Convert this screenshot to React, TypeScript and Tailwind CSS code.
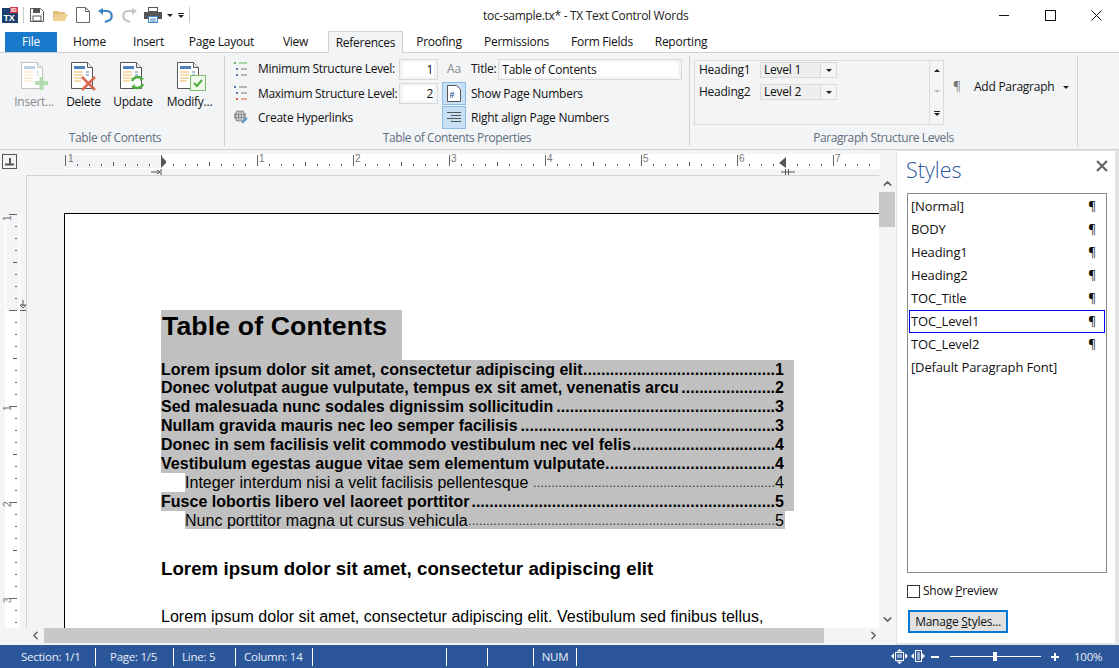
import React from 'react';
import { ChevronUp, ChevronDown, ChevronLeft, ChevronRight } from 'lucide-react';

const TABS = [
  { name: 'Home', w: 'w-[65px]' },
  { name: 'Insert', w: 'w-[53px]' },
  { name: 'Page Layout', w: 'w-[93px]' },
  { name: 'View', w: 'w-[55px]' },
];
const TABS_AFTER = [
  { name: 'Proofing', w: 'w-[72px]' },
  { name: 'Permissions', w: 'w-[83px]' },
  { name: 'Form Fields', w: 'w-[88px]' },
  { name: 'Reporting', w: 'w-[70px]' },
];

const TOC_ROWS = [
  { text: 'Lorem ipsum dolor sit amet, consectetur adipiscing elit', page: 1, level: 1, dots: 43 },
  { text: 'Donec volutpat augue vulputate, tempus ex sit amet, venenatis arcu', page: 2, level: 1, dots: 21 },
  { text: 'Sed malesuada nunc sodales dignissim sollicitudin', page: 3, level: 1, dots: 49 },
  { text: 'Nullam gravida mauris nec leo semper facilisis', page: 3, level: 1, dots: 57 },
  { text: 'Donec in sem facilisis velit commodo vestibulum nec vel felis', page: 4, level: 1, dots: 32 },
  { text: 'Vestibulum egestas augue vitae sem elementum vulputate.', page: 4, level: 1, dots: 37 },
  { text: 'Integer interdum nisi a velit facilisis pellentesque', page: 4, level: 2, dots: 67 },
  { text: 'Fusce lobortis libero vel laoreet porttitor', page: 5, level: 1, dots: 68 },
  { text: 'Nunc porttitor magna ut cursus vehicula', page: 5, level: 3, dots: 85 },
];

const STYLES = ['[Normal]', 'BODY', 'Heading1', 'Heading2', 'TOC_Title', 'TOC_Level1', 'TOC_Level2'];

const DocBase = ({ faded }: { faded?: boolean }) => (
  <>
    <path d="M1.5 1.5h16l5 5v21h-21z" fill="#fff" stroke={faded ? '#c4c4c4' : '#555'} />
    <path d="M17.5 1.5v5h5" fill="#f0f0f0" stroke={faded ? '#c4c4c4' : '#555'} />
    <rect x="4" y="5" width="11" height="3" fill={faded ? '#bcd0e2' : '#4f81bd'} />
    <path d="M4 11h9M4 14h9M4 17h9M4 20h7" stroke={faded ? '#f4dfb8' : '#eeb85f'} strokeWidth="1" />
    <path d="M16 11h3M16 14h3" stroke={faded ? '#bcd0e2' : '#4f81bd'} strokeWidth="1" />
  </>
);

const BigButton = ({ label, kind, muted, w }: { label: string; kind: string; muted?: boolean; w: string }) => (
  <div className={`flex flex-col items-center ${w}`}>
    <svg width="34" height="32" viewBox="0 0 34 32">
      <g transform="translate(3 0)">
        <DocBase faded={kind === 'insert'} />
      </g>
      {kind === 'insert' && <path d="M18 22h13M24.500 16v13" stroke="#b4dcae" strokeWidth="4" />}
      {kind === 'delete' && <path d="M15 16l13 13M28 16L15 29" stroke="#d9694e" strokeWidth="2.6" />}
      {kind === 'update' && (
        <g fill="none" stroke="#4caf3f" strokeWidth="2.4">
          <path d="M16 20a6 6 0 0 1 10-2" />
          <path d="M27 23a6 6 0 0 1-10 2" />
          <path d="M24 15l4 3-4 2z" fill="#4caf3f" strokeWidth="0" />
          <path d="M19 23l-4 3 4 2z" fill="#4caf3f" strokeWidth="0" />
        </g>
      )}
      {kind === 'modify' && (
        <g>
          <rect x="17.500" y="14.500" width="15" height="15" fill="#eef7ea" stroke="#7cc06f" />
          <path d="M21 22l3 3 5-6" fill="none" stroke="#4caf3f" strokeWidth="2" />
        </g>
      )}
    </svg>
    <span className={`whitespace-nowrap ${muted ? 'text-[#8a8a8a]' : 'text-[#111]'}`}>{label}</span>
  </div>
);

const ListIcon = ({ top, bottom, topLine, bottomLine }: { top: string; bottom: string; topLine: string; bottomLine: string }) => (
  <svg width="16" height="16" viewBox="0 0 16 16">
    <rect x="1" y="1" width="2" height="2" fill={top} />
    <rect x="6" y="1.500" width="8" height="1" fill={topLine} />
    <rect x="3" y="7" width="2" height="2" fill="#4f81bd" />
    <rect x="8" y="7.500" width="6" height="1" fill="#777" />
    <rect x="3" y="13" width="2" height="2" fill={bottom} />
    <rect x="8" y="13.500" width="6" height="1" fill={bottomLine} />
  </svg>
);

const NumberBox = ({ value }: { value: number }) => (
  <div className="w-[39px] h-[21px] border border-[#dadada] py-[2px] px-[3px]">
    <div className="h-full bg-white text-right pr-[1px] leading-[15px]">{value}</div>
  </div>
);

const LevelSelect = ({ label }: { label: string }) => (
  <div className="flex items-center h-[16px] w-[77px] border border-[#dadada] bg-[#eeeeee] ml-[10px]">
    <span className="pl-[3px] flex-1">{label}</span>
    <div className="w-[16px] h-full border-l border-[#dadada] bg-[#f3f4f6] flex items-center justify-center">
      <div className="border-x-[3px] border-x-transparent border-t-[3px] border-t-[#222]" />
    </div>
  </div>
);

const TopRuler = () => {
  const ticks = Array.from({ length: 68 }, (_, i) => 65 + i * 12);
  const labels = [[68, '1'], [259, '1'], [355, '2'], [451, '3'], [547, '4'], [643, '5'], [739, '6'], [835, '7']] as const;
  return (
    <svg width="880" height="25" viewBox="0 0 880 25" className="absolute left-0 top-0">
      <rect x="65" y="4" width="815" height="15" fill="#fff" />
      <rect x="66" y="5" width="95" height="13" fill="#f3f4f6" />
      {ticks.map((x) => {
        const k = (x - 65) % 96;
        if (k === 0) return <rect key={x} x={x} y="5" width="1" height="11" fill="#666" />;
        if (k === 48) return <rect key={x} x={x} y="12" width="1" height="4" fill="#555" />;
        return <rect key={x} x={x} y="14" width="1" height="2" fill="#666" />;
      })}
      {labels.map(([x, t], i) => (
        <text key={i} x={x} y="12" fontSize="10" fill="#777" fontFamily="'Liberation Sans', sans-serif">{t}</text>
      ))}
      <path d="M161 6l5 5v2l-5 5z" fill="#555" />
      <path d="M151 22h9M157 20l3 2-3 2M161 19v6" stroke="#555" fill="none" />
      <path d="M786 7l-7 6 7 5z" fill="#555" />
      <path d="M781 22h14M785.500 19v6M788.500 19v6" stroke="#555" fill="none" />
    </svg>
  );
};

const SideRuler = () => {
  const ticks = Array.from({ length: 35 }, (_, i) => 39 + i * 12);
  const labels = [[7, '1'], [232, '1'], [328, '2'], [424, '3']] as const;
  return (
    <svg width="26" height="453" viewBox="0 0 26 453" className="shrink-0">
      <rect x="5" y="39" width="15" height="414" fill="#fff" />
      <rect x="6" y="40" width="13" height="95" fill="#f3f4f6" />
      {ticks.map((y) => {
        const k = (y - 39) % 96;
        if (k === 0) return <rect key={y} x="9" y={y} width="8" height="1" fill="#666" />;
        if (k === 48) return <rect key={y} x="13" y={y} width="4" height="1" fill="#555" />;
        return <rect key={y} x="15" y={y} width="2" height="1" fill="#666" />;
      })}
      {labels.map(([y, t], i) => (
        <text key={i} x="-1" y="0" transform={`translate(11 ${y === 7 ? 45 : y + 3}) rotate(-90)`} fontSize="10" fill="#777" fontFamily="'Liberation Sans', sans-serif">{t}</text>
      ))}
      <path d="M23 125v6M20 130h6l-3 3zM20 135.500h6" stroke="#555" fill="none" />
    </svg>
  );
};

const TocRow = ({ text, page, level, dots }: { text: string; page: number; level: number; dots: number }) => (
  <div className={`flex h-[18.89px] leading-[18.89px] pt-px bg-[#c0c0c0] tracking-[0.02px] ${level === 1 ? 'font-bold pr-[10px]' : level === 2 ? 'ml-[24px] pr-[10px]' : 'ml-[24px] mr-[9px] pr-px'}`}>
    <span className="whitespace-nowrap">{text}</span>
    <span className={`flex-1 whitespace-nowrap flex justify-end ${level === 1 ? '' : 'text-[13px] tracking-normal text-[#333]'}`}>{'.'.repeat(dots)}</span>
    <span>{page}</span>
  </div>
);

export default function App() {
  return (
    <div className="w-screen h-screen overflow-hidden flex flex-col bg-white text-[12px] text-[#111] font-['Open_Sans',sans-serif] tracking-[-0.25px]">
      {/* title bar */}
      <div className="relative h-[30px] shrink-0 flex items-center pl-[2px]">
        <svg width="16" height="16" viewBox="0 0 16 16">
          <rect x="0" y="1" width="16" height="15" fill="#1c3f6e" />
          <rect x="8" y="0" width="8" height="6" fill="#d8384a" />
          <text x="8.500" y="5" fontSize="4.500" fill="#fff" fontWeight="700" fontFamily="'Liberation Sans', sans-serif">XD</text>
          <text x="1.500" y="14" fontSize="9" fill="#fff" fontWeight="700" fontFamily="'Liberation Sans', sans-serif">TX</text>
        </svg>
        <div className="w-px h-[16px] bg-[#c8c8c8] ml-[5px] mr-[6px]" />
        <svg width="14" height="14" viewBox="0 0 14 14" className="mr-[9px]">
          <path d="M.5.500h10l3 3v10H.5z" fill="none" stroke="#555" />
          <rect x="3" y="1" width="7" height="4" fill="#555" />
          <rect x="3" y="8" width="8" height="5" fill="none" stroke="#555" />
        </svg>
        <svg width="15" height="12" viewBox="0 0 15 12" className="mr-[8px]">
          <path d="M0 2h5l1 1h6v2H3L0 12z" fill="#e3bd7a" />
          <path d="M3 5h12l-3 7H0z" fill="#f0d194" />
        </svg>
        <svg width="14" height="16" viewBox="0 0 14 16" className="mr-[8px]">
          <path d="M.5.500h9l4 4v11H.5z" fill="#fff" stroke="#666" />
          <path d="M9.500.500v4h4" fill="none" stroke="#666" />
        </svg>
        <svg width="15" height="15" viewBox="0 0 15 15" className="mr-[9px]">
          <path d="M4 3h5a5 5 0 0 1 1 9.800L7 14" fill="none" stroke="#3c83c4" strokeWidth="2.200" />
          <path d="M5 0L0 3l5 4z" fill="#3c83c4" />
        </svg>
        <svg width="15" height="15" viewBox="0 0 15 15" className="mr-[7px]">
          <path d="M11 3H6a5 5 0 0 0-1 9.800L8 14" fill="none" stroke="#c4c4c4" strokeWidth="2.200" />
          <path d="M10 0l5 3-5 4z" fill="#c4c4c4" />
        </svg>
        <svg width="18" height="16" viewBox="0 0 18 16">
          <rect x="4.500" y=".5" width="9" height="4" fill="#fff" stroke="#555" />
          <rect x="0" y="5" width="18" height="7" fill="#555" />
          <rect x="4.500" y="9.500" width="9" height="6" fill="#fff" stroke="#3c83c4" />
          <path d="M6 12h6M6 14h6" stroke="#3c83c4" />
        </svg>
        <div className="ml-[5px] border-x-[3px] border-x-transparent border-t-[3px] border-t-[#222]" />
        <div className="ml-[5px] w-[6px] flex flex-col items-center gap-px">
          <div className="w-[6px] h-px bg-[#222]" />
          <div className="border-x-[3px] border-x-transparent border-t-[3px] border-t-[#222]" />
        </div>
        <div className="w-px h-[16px] bg-[#c8c8c8] ml-[5px]" />
        <div className="absolute left-[483px] top-[7px] text-[12px] text-[#222] whitespace-nowrap tracking-[-0.3px]">toc-sample.tx* - TX Text Control Words</div>
        <div className="ml-auto flex items-center">
          <div className="w-[46px] flex justify-center">
            <svg width="10" height="10" viewBox="0 0 10 10"><path d="M0 5.500h10" stroke="#111" /></svg>
          </div>
          <div className="w-[46px] flex justify-center">
            <svg width="11" height="11" viewBox="0 0 11 11"><rect x=".5" y=".5" width="10" height="10" fill="none" stroke="#111" /></svg>
          </div>
          <div className="w-[46px] flex justify-center">
            <svg width="11" height="11" viewBox="0 0 11 11"><path d="M.5.500l10 10M10.500.500l-10 10" stroke="#111" fill="none" /></svg>
          </div>
        </div>
      </div>

      {/* tabs */}
      <div className="h-[23px] shrink-0 flex items-end pl-[5px] border-b border-[#d2d2d2]">
        <div className="w-[52px] h-[20px] bg-[#1979ca] text-white flex items-center justify-center">File</div>
        {TABS.map((t) => (
          <div key={t.name} className={`${t.w} h-[20px] flex items-center justify-center`}>{t.name}</div>
        ))}
        <div className="w-[75px] h-[22px] ml-[5px] bg-[#f3f4f6] border border-[#d2d2d2] border-b-0 mb-[-1px] flex items-center justify-center">References</div>
        {TABS_AFTER.map((t) => (
          <div key={t.name} className={`${t.w} h-[20px] flex items-center justify-center`}>{t.name}</div>
        ))}
      </div>

      {/* ribbon */}
      <div className="h-[97px] shrink-0 flex bg-[#f3f4f6] border-b border-[#d2d2d2] py-[3px]">
        <div className="w-[225px] flex flex-col border-r border-[#d2d2d2] pl-[9px]">
          <div className="flex-1 flex pt-[5px]">
            <BigButton label="Insert..." kind="insert" muted w="w-[50px]" />
            <BigButton label="Delete" kind="delete" w="w-[49px]" />
            <BigButton label="Update" kind="update" w="w-[50px]" />
            <BigButton label="Modify..." kind="modify" w="w-[63px]" />
          </div>
          <div className="text-center text-[#5f6e80] h-[18px] -mb-px pr-[3px] tracking-[-0.35px]">Table of Contents</div>
        </div>

        <div className="w-[465px] flex flex-col border-r border-[#d2d2d2]">
          <div className="flex-1 flex pt-px pl-[8px]">
            <div className="flex flex-col w-[205px]">
              <div className="flex items-center h-[24px]">
                <ListIcon top="#5cb85c" topLine="#5cb85c" bottom="#4f81bd" bottomLine="#777" />
                <span className="ml-[9px] w-[141px] whitespace-nowrap tracking-[-0.3px]">Minimum Structure Level:</span>
                <NumberBox value={1} />
              </div>
              <div className="flex items-center h-[24px]">
                <ListIcon top="#4f81bd" topLine="#777" bottom="#e0603c" bottomLine="#e0603c" />
                <span className="ml-[9px] w-[141px] whitespace-nowrap tracking-[-0.3px] pt-[2px]">Maximum Structure Level:</span>
                <NumberBox value={2} />
              </div>
              <div className="flex items-center h-[24px]">
                <svg width="16" height="16" viewBox="0 0 16 16">
                  <circle cx="7" cy="7" r="6" fill="#777" />
                  <path d="M1 7h12M7 1v12M2 4h10M2 10h10" stroke="#f3f4f6" strokeWidth=".7" fill="none" />
                  <ellipse cx="7" cy="7" rx="3" ry="6" fill="none" stroke="#f3f4f6" strokeWidth=".7" />
                  <path d="M9 14l5-5" stroke="#4f9ad4" strokeWidth="2" />
                </svg>
                <span className="ml-[9px] whitespace-nowrap pt-[2px]">Create Hyperlinks</span>
              </div>
            </div>
            <div className="flex flex-col ml-[4px]">
              <div className="flex items-center h-[24px]">
                <div className="w-[24px] flex justify-center text-[#8a8a8a] text-[12px]">Aa</div>
                <span className="ml-[5px]">Title:</span>
                <div className="ml-[2px] w-[184px] h-[21px] border border-[#dadada] py-[2px] px-[3px]">
                  <div className="h-full bg-white leading-[15px] whitespace-nowrap">Table of Contents</div>
                </div>
              </div>
              <div className="flex items-center h-[24px]">
                <div className="w-[24px] h-[23px] bg-[#c8e0f6] border border-[#8cbbe6] flex items-center justify-center">
                  <svg width="14" height="17" viewBox="0 0 14 17">
                    <path d="M.5.500h9l4 4v12H.5z" fill="#fff" stroke="#555" />
                    <text x="2.500" y="13" fontSize="9" fontWeight="700" fill="#2f5f96" fontFamily="'Liberation Sans', sans-serif">#</text>
                  </svg>
                </div>
                <span className="ml-[5px] whitespace-nowrap pt-[2px]">Show Page Numbers</span>
              </div>
              <div className="flex items-center h-[24px]">
                <div className="w-[24px] h-[23px] bg-[#c8e0f6] border border-[#8cbbe6] flex items-center justify-center">
                  <svg width="16" height="11" viewBox="0 0 16 11">
                    <path d="M1 .5h14M5 3.500h10M1 6.500h14M5 9.500h10" stroke="#555" fill="none" />
                  </svg>
                </div>
                <span className="ml-[5px] whitespace-nowrap pt-[2px]">Right align Page Numbers</span>
              </div>
            </div>
          </div>
          <div className="text-center text-[#5f6e80] h-[18px] -mb-px tracking-[-0.4px]">Table of Contents Properties</div>
        </div>

        <div className="w-[388px] flex flex-col border-r border-[#d2d2d2]">
          <div className="flex-1 flex pl-[4px] pt-[4px]">
            <div className="w-[250px] h-[65px] border border-[#dadada] flex">
              <div className="flex-1 flex flex-col pl-[4px] pt-[1px] gap-[6px]">
                <div className="flex items-center h-[16px]">
                  <span className="w-[51px] whitespace-nowrap">Heading1</span>
                  <LevelSelect label="Level 1" />
                </div>
                <div className="flex items-center h-[16px]">
                  <span className="w-[51px] whitespace-nowrap">Heading2</span>
                  <LevelSelect label="Level 2" />
                </div>
              </div>
              <div className="w-[14px] border-l border-[#dadada] flex flex-col items-center justify-between py-[8px]">
                <div className="border-x-[3px] border-x-transparent border-b-[3px] border-b-[#222]" />
                <div className="border-x-[3px] border-x-transparent border-t-[3px] border-t-[#bbb]" />
                <div className="flex flex-col gap-px">
                  <div className="w-[6px] h-px bg-[#222]" />
                  <div className="border-x-[3px] border-x-transparent border-t-[3px] border-t-[#222]" />
                </div>
              </div>
            </div>
            <div className="flex items-center h-[54px] ml-[9px]">
              <span className="text-[#777] text-[12px] w-[21px]">¶</span>
              <span className="whitespace-nowrap">Add Paragraph</span>
              <div className="ml-[9px] border-x-[3px] border-x-transparent border-t-[3px] border-t-[#222]" />
            </div>
          </div>
          <div className="text-center text-[#5f6e80] h-[18px] -mb-px tracking-[-0.4px]">Paragraph Structure Levels</div>
        </div>
      </div>

      {/* editor + styles */}
      <div className="flex-1 min-h-0 flex bg-[#f3f4f6]">
        <div className="w-[896px] flex flex-col">
          <div className="relative h-[25px] shrink-0">
            <div className="absolute left-[2px] top-[4px] w-[15px] h-[15px] border border-[#555] bg-[#f3f4f6] flex items-center justify-center">
              <svg width="11" height="9" viewBox="0 0 11 9"><path d="M1 7.500h9M6 1v6" stroke="#555" strokeWidth="2" fill="none" /></svg>
            </div>
            <TopRuler />
          </div>
          <div className="flex-1 min-h-0 flex">
            <SideRuler />
            <div className="w-[853px] border-l border-t border-[#d2d2d2] overflow-hidden pl-[37px] pt-[37px]">
              <div className="w-[900px] border-l-[1.5px] border-t-[1.5px] border-black bg-white pl-[96px] pt-[95.5px] h-[600px] text-black font-['Liberation_Sans',sans-serif] tracking-normal text-[16px]">
                <div className="w-[633px]">
                  <div className="w-[241px] h-[50px] bg-[#c0c0c0] font-bold text-[26.67px] leading-[32px] pl-px tracking-[0.12px]">Table of Contents</div>
                  {TOC_ROWS.map((r) => (
                    <TocRow key={r.text} {...r} />
                  ))}
                  <div className="mt-[28px] font-bold text-[18.67px] leading-[24px] tracking-[0.036px] whitespace-nowrap">Lorem ipsum dolor sit amet, consectetur adipiscing elit</div>
                  <div className="mt-[27px] whitespace-nowrap leading-[18px] tracking-[0.035px]">Lorem ipsum dolor sit amet, consectetur adipiscing elit. Vestibulum sed finibus tellus,</div>
                </div>
              </div>
            </div>
            <div className="w-[16px] flex flex-col items-center bg-[#f3f4f6]">
              <ChevronUp size={13} strokeWidth={3} className="text-[#666] my-[2px]" />
              <div className="w-[16px] h-[35px] bg-[#c8c8c8]" />
              <div className="flex-1" />
              <ChevronDown size={13} strokeWidth={3} className="text-[#666] my-[2px]" />
            </div>
          </div>
          <div className="h-[17px] shrink-0 flex pb-[2px] pl-[27px] pr-[16px]">
            <div className="w-[17px] flex items-center justify-center"><ChevronLeft size={13} strokeWidth={3} className="text-[#666]" /></div>
            <div className="w-[780px] bg-[#c8c8c8]" />
            <div className="flex-1 flex items-center justify-end"><ChevronRight size={13} strokeWidth={3} className="text-[#666]" /></div>
          </div>
        </div>

        <div className="flex-1 bg-white border-l border-t border-b-2 border-r-[4px] border-[#e4e4e4] flex flex-col pl-[10px] pr-[8px] relative">
          <div className="h-[42px] shrink-0 flex items-start">
            <span className="text-[21.500px] font-light text-[#2b579a] leading-[28px] mt-[5px] -ml-px tracking-normal">Styles</span>
            <svg width="12" height="12" viewBox="0 0 12 12" className="absolute right-[7px] top-[9px]">
              <path d="M1 1l10 10M11 1L1 11" stroke="#666" strokeWidth="2.200" fill="none" />
            </svg>
          </div>
          <div className="h-[380px] border border-[#8a8a8a] p-[1px] pt-[1px] text-[13px] tracking-[-0.15px]">
            {STYLES.map((s) => (
              <div key={s} className={`h-[23px] flex items-center justify-between pl-[1px] pr-[8px] pt-[1px] ${s === 'TOC_Level1' ? 'border border-[#0000ff]' : 'border border-transparent'}`}>
                <span>{s}</span>
                <span className="text-[12px]">¶</span>
              </div>
            ))}
            <div className="h-[23px] flex items-center pl-[2px] pt-[1px] whitespace-nowrap">[Default Paragraph Font]</div>
          </div>
          <div className="mt-[9px] h-[18px] flex items-center gap-[3px]">
            <div className="w-[13px] h-[13px] border border-[#333] bg-white" />
            <span>Show <span className="underline">P</span>review</span>
          </div>
          <div className="mt-[10px] ml-[1px] w-[100px] h-[23px] border-2 border-[#0078d7] bg-[#e1e1e1] flex items-center justify-center">
            <span>Manage <span className="underline">S</span>tyles...</span>
          </div>
        </div>
      </div>

      {/* status bar */}
      <div className="h-[23px] shrink-0 bg-[#2b579a] text-[#e8eef6] text-[11.500px] flex items-center">
        <div className="w-[96px] pl-[21px] h-[18px] leading-[18px] border-r border-white">Section: 1/1</div>
        <div className="w-[78px] pl-[14px] h-[18px] leading-[18px] border-r border-white">Page: 1/5</div>
        <div className="w-[62px] pl-[8px] h-[18px] leading-[18px] border-r border-white">Line: 5</div>
        <div className="w-[77px] pl-[8px] h-[18px] leading-[18px] border-r border-white">Column: 14</div>
        <div className="w-[134px] h-[18px] border-r border-white" />
        <div className="w-[41px] h-[18px] border-r border-white" />
        <div className="w-[46px] h-[18px] border-r border-white" />
        <div className="w-[43px] h-[18px] leading-[18px] text-center border-r border-white">NUM</div>
        <div className="ml-auto flex items-center">
          <svg width="34" height="16" viewBox="0 0 34 16" className="mr-[6px]">
            <g fill="#fff">
              <path d="M0 7l3-3v6zM17 7l-3-3v6zM8.500 0l3 2.500h-6zM8.500 15l3-2.500h-6z" />
              <path d="M20 7l3-3v6zM34 7l-3-3v6z" />
            </g>
            <rect x="4.500" y="3.500" width="8" height="8" fill="none" stroke="#fff" />
            <rect x="24.500" y="1.500" width="6" height="11" fill="none" stroke="#fff" />
            <path d="M6 6h5M6 8h5M26 4h3M26 6h3M26 8h3M26 10h3" stroke="#fff" />
          </svg>
          <div className="w-[8px] h-[2px] bg-white" />
          <div className="relative w-[91px] h-px bg-white ml-[11px] mr-[10px]">
            <div className="absolute left-[43px] top-[-4px] w-[4px] h-[9px] bg-white" />
          </div>
          <svg width="8" height="8" viewBox="0 0 8 8"><path d="M0 4h8M4 0v8" stroke="#fff" strokeWidth="2" /></svg>
          <span className="w-[60px] pl-[15px] whitespace-nowrap">100%</span>
        </div>
      </div>
    </div>
  );
}
